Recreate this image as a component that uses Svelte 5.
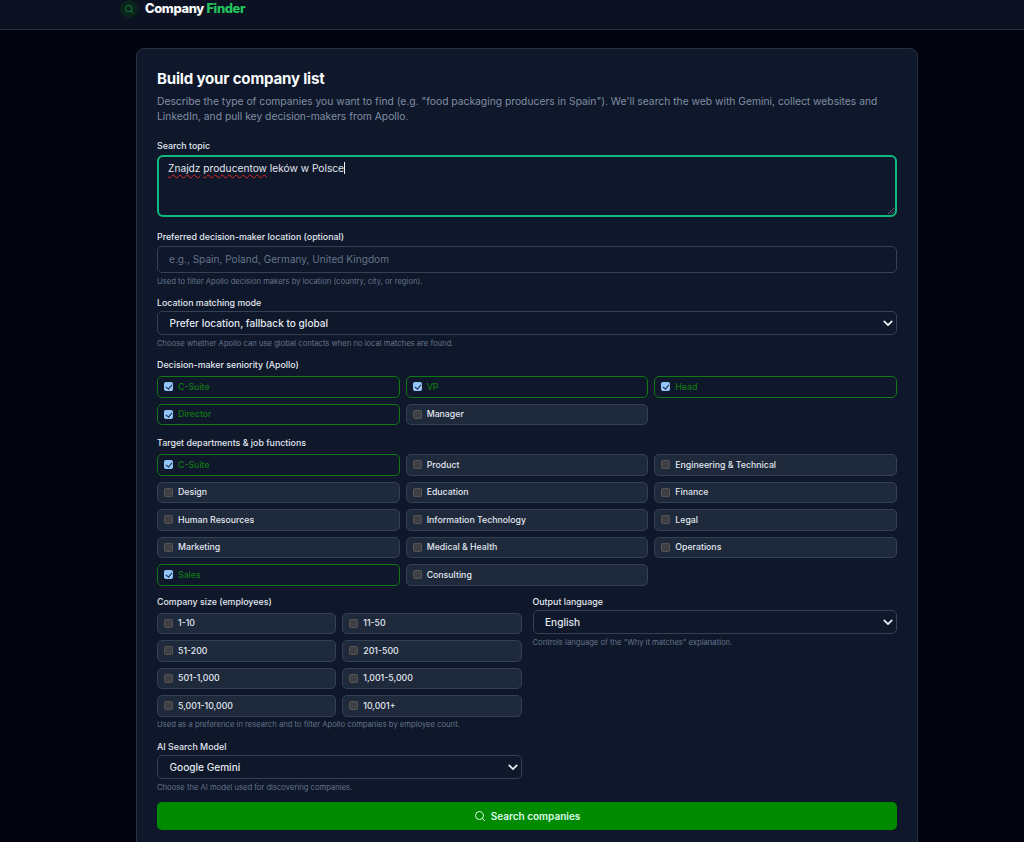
<script>
  const seniority = [
    { label: 'C-Suite', on: true }, { label: 'VP', on: true }, { label: 'Head', on: true },
    { label: 'Director', on: true }, { label: 'Manager', on: false }
  ];
  const departments = [
    { label: 'C-Suite', on: true }, { label: 'Product' }, { label: 'Engineering & Technical' },
    { label: 'Design' }, { label: 'Education' }, { label: 'Finance' },
    { label: 'Human Resources' }, { label: 'Information Technology' }, { label: 'Legal' },
    { label: 'Marketing' }, { label: 'Medical & Health' }, { label: 'Operations' },
    { label: 'Sales', on: true }, { label: 'Consulting' }
  ];
  const sizes = ['1-10', '11-50', '51-200', '201-500', '501-1,000', '1,001-5,000', '5,001-10,000', '10,001+'];
</script>

{#snippet pill(label, on)}
  <label class="pill" class:on>
    <input type="checkbox" checked={on} />
    <span>{label}</span>
  </label>
{/snippet}

{#snippet chevron()}
  <svg class="chev" viewBox="0 0 12 8" width="10" height="7" aria-hidden="true">
    <path d="M1.5 1.5 6 6l4.5-4.5" fill="none" stroke="#f1f5f9" stroke-width="2" stroke-linecap="round" stroke-linejoin="round" />
  </svg>
{/snippet}

<header>
  <div class="brand">
    <span class="logo">
      <svg viewBox="0 0 24 24" width="10" height="10" fill="none" stroke="#13753a" stroke-width="2.6" stroke-linecap="round"><circle cx="11" cy="11" r="7.5" /><path d="m21 21-4.5-4.5" /></svg>
    </span>
    <span class="name">Company <em>Finder</em></span>
  </div>
</header>

<main>
  <section class="card">
    <h1>Build your company list</h1>
    <p class="intro">Describe the type of companies you want to find (e.g. "food packaging producers in Spain"). We'll search the web with Gemini, collect websites and LinkedIn, and pull key decision-makers from Apollo.</p>

    <div class="field topic">
      <div class="lab">Search topic</div>
      <div class="area">
        <span class="sp">Znajdz</span> <span class="sp">producentow</span> leków w Polsce<span class="caret"></span>
        <svg class="grip" viewBox="0 0 8 8" width="8" height="8"><path d="M1 7 7 1M4.5 7 7 4.5" stroke="#64748b" stroke-width="0.9" /></svg>
      </div>
    </div>

    <div class="field loc">
      <div class="lab">Preferred decision-maker location (optional)</div>
      <input class="text" type="text" placeholder="e.g., Spain, Poland, Germany, United Kingdom" />
      <div class="hint">Used to filter Apollo decision makers by location (country, city, or region).</div>
    </div>

    <div class="field mode">
      <div class="lab tight">Location matching mode</div>
      <div class="sel">
        <select><option>Prefer location, fallback to global</option></select>
        {@render chevron()}
      </div>
      <div class="hint">Choose whether Apollo can use global contacts when no local matches are found.</div>
    </div>

    <div class="field sen">
      <div class="lab wide">Decision-maker seniority (Apollo)</div>
      <div class="grid3">
        {#each seniority as s}{@render pill(s.label, s.on)}{/each}
      </div>
    </div>

    <div class="field dep">
      <div class="lab wide">Target departments &amp; job functions</div>
      <div class="grid3">
        {#each departments as d}{@render pill(d.label, !!d.on)}{/each}
      </div>
    </div>

    <div class="split">
      <div class="left">
        <div class="lab wide">Company size (employees)</div>
        <div class="grid2">
          {#each sizes as s}{@render pill(s, false)}{/each}
        </div>
        <div class="hint near">Used as a preference in research and to filter Apollo companies by employee count.</div>
        <div class="model">
          <div class="lab tight">AI Search Model</div>
          <div class="sel">
            <select><option>Google Gemini</option></select>
            {@render chevron()}
          </div>
          <div class="hint">Choose the AI model used for discovering companies.</div>
        </div>
      </div>
      <div class="right">
        <div class="lab tight">Output language</div>
        <div class="sel">
          <select><option>English</option></select>
          {@render chevron()}
        </div>
        <div class="hint">Controls language of the "Why it matches" explanation.</div>
      </div>
    </div>

    <button type="button">
      <svg viewBox="0 0 24 24" width="12" height="12" fill="none" stroke="#dcfce7" stroke-width="2" stroke-linecap="round"><circle cx="11" cy="11" r="8" /><path d="m21 21-4.3-4.3" /></svg>
      Search companies
    </button>
  </section>
</main>

<style>
  :global(body) {
    margin: 0;
    background: #01030f;
    color: #e2e8f0;
    font-family: Inter, "Liberation Sans", sans-serif;
    overflow: hidden;
  }
  header {
    height: 29px;
    background: #0c1222;
    border-bottom: 1px solid #262f40;
    padding-left: 120px;
  }
  .brand { display: flex; align-items: center; gap: 7px; height: 17px; }
  .logo {
    width: 18px; height: 18px; flex: none; border-radius: 50%;
    background: #0b2419;
    display: flex; align-items: center; justify-content: center;
  }
  .name { font-size: 12.9px; font-weight: 800; color: #f8fafc; letter-spacing: -0.35px; }
  .name em { font-style: normal; color: #22c55e; }
  main { padding: 18px 0 0 136px; }
  .card {
    width: 782px;
    box-sizing: border-box;
    height: 830px;
    background: #0f172a;
    border: 1px solid #283142;
    border-radius: 8px;
    padding: 20px;
  }
  h1 { margin: 0; font-size: 15.1px; line-height: 19px; font-weight: 700; color: #f8fafc; letter-spacing: -0.2px; }
  .intro { margin: 6px 0 0; font-size: 10.3px; line-height: 15px; color: #7f8ea3; }
  .lab { font-size: 8.85px; line-height: 12px; font-weight: 500; color: #e2e8f0; margin-bottom: 3px; }
  .lab.tight { margin-bottom: 2px; }
  .lab.wide { margin-bottom: 5px; }
  .hint { font-size: 7.65px; line-height: 11px; color: #64748b; margin-top: 3px; }
  .hint.near { margin-top: 2px; }
  .topic { margin-top: 16px; }
  .area {
    position: relative;
    box-sizing: border-box;
    height: 62px;
    border: 2px solid #10b981;
    border-radius: 6px;
    padding: 4px 9px;
    font-size: 10.2px;
    line-height: 15px;
    color: #e2e8f0;
  }
  .sp { text-decoration: underline wavy #dc2626 0.7px; text-underline-offset: 2px; }
  .caret { display: inline-block; width: 1px; height: 12px; background: #f1f5f9; vertical-align: -2px; }
  .grip { position: absolute; right: 0; bottom: 0; }
  .loc { margin-top: 14px; }
  .text, select {
    display: block;
    width: 100%;
    box-sizing: border-box;
    background: #0f172a;
    border: 1px solid #334155;
    border-radius: 5px;
    font-family: inherit;
    outline: none;
    margin: 0;
  }
  .text { height: 26.5px; padding: 0 11px; font-size: 10.1px; color: #e2e8f0; }
  .text::placeholder { color: #64748b; opacity: 1; }
  .mode { margin-top: 10.5px; }
  .sel { position: relative; }
  select {
    appearance: none;
    height: 24px;
    padding: 0 11.5px;
    font-size: 10.1px;
    font-weight: 500;
    color: #e2e8f0;
  }
  .chev { position: absolute; right: 4px; top: 9px; pointer-events: none; }
  .sen { margin-top: 10px; }
  .dep { margin-top: 12px; }
  .grid3 { display: grid; grid-template-columns: repeat(3, 1fr); gap: 6px; }
  .grid2 { display: grid; grid-template-columns: repeat(2, 1fr); gap: 6px; }
  .pill {
    display: flex;
    align-items: center;
    gap: 5px;
    box-sizing: border-box;
    height: 21.5px;
    padding: 0 5px;
    background: #1e293b;
    border: 1px solid #334155;
    border-radius: 5px;
    font-size: 8.75px;
    font-weight: 500;
    color: #e2e8f0;
  }
  .pill input {
    appearance: none;
    margin: 0 0 0 1px;
    width: 9px; height: 9px;
    flex: none;
    border-radius: 1.5px;
    background: #3f3f46;
    border: 1px solid #57534e;
    box-sizing: border-box;
    position: relative;
  }
  .pill input:checked {
    background: #93c5fd;
    border-color: #93c5fd;
  }
  .pill input:checked::after {
    content: "";
    position: absolute;
    left: 2px; top: 0;
    width: 2.5px; height: 5px;
    border: solid #1e293b;
    border-width: 0 1.4px 1.4px 0;
    transform: rotate(40deg);
  }
  .pill.on { background: #0f172a; border-color: #0f7a12; color: #0f7a12; }
  .split { display: grid; grid-template-columns: 1fr 1fr; gap: 11px; margin-top: 10px; }
  .model { margin-top: 11px; }
  button {
    display: flex;
    align-items: center;
    justify-content: center;
    gap: 5px;
    width: 100%;
    height: 28px;
    margin-top: 9px;
    background: #008a00;
    border: none;
    border-radius: 5px;
    color: #dcfce7;
    font-family: inherit;
    font-size: 10px;
    font-weight: 600;
  }
</style>
